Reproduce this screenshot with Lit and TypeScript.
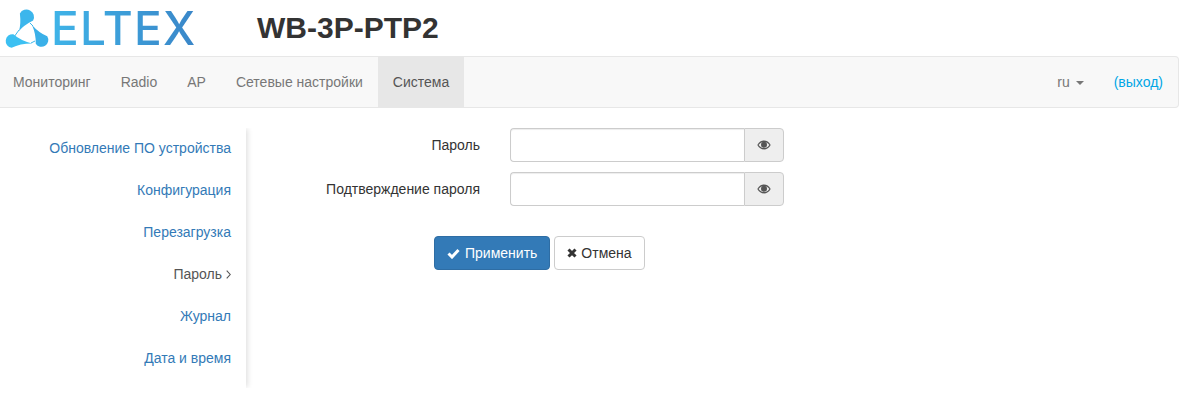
import {LitElement, css, html} from 'lit';
import {customElement} from 'lit/decorators.js';

const TOP_ITEMS = ['Мониторинг', 'Radio', 'AP', 'Сетевые настройки', 'Система'];
const SIDE_ITEMS = ['Обновление ПО устройства', 'Конфигурация', 'Перезагрузка', 'Пароль', 'Журнал', 'Дата и время'];
const FIELDS = ['Пароль', 'Подтверждение пароля'];

// teardrop: a circle whose tail tapers towards (tx, ty)
function drop(cx: number, cy: number, r: number, tx: number, ty: number) {
  const len = Math.hypot(tx - cx, ty - cy);
  const dx = (tx - cx) / len;
  const dy = (ty - cy) / len;
  const ax = cx - dy * r;
  const ay = cy + dx * r;
  const bx = cx + dy * r;
  const by = cy - dx * r;
  const mx = cx + dx * r * 1.15;
  const my = cy + dy * r * 1.15;
  return `M${ax} ${ay}Q${mx - dy * 1.5} ${my + dx * 1.5} ${tx} ${ty}Q${mx + dy * 1.5} ${my - dx * 1.5} ${bx} ${by}A${r} ${r} 0 0 0 ${ax} ${ay}Z`;
}

const eye = html`<svg class="eye" viewBox="0 0 14 10" width="14" height="10">
  <path d="M0.3 5C2 2 4.3.6 7 .6S12 2 13.7 5C12 8 9.7 9.4 7 9.4S2 8 .3 5Z" fill="#555"/>
  <path d="M1.6 5C3 3 4.8 1.9 7 1.9S11 3 12.4 5C11 7 9.2 8.1 7 8.1S3 7 1.6 5Z" fill="#eee"/>
  <circle cx="7" cy="4.8" r="3" fill="#555"/>
</svg>`;

@customElement('app-root')
export class AppRoot extends LitElement {
  static styles = css`
    :host {
      display: block;
      font-family: 'Liberation Sans', Arial, sans-serif;
      font-size: 14px;
      color: #333;
      background: #fff;
      height: 413px;
      overflow: hidden;
    }
    .header {
      display: flex;
      align-items: center;
      height: 56px;
    }
    .logo {
      display: flex;
      align-items: center;
      width: 257px;
      flex: none;
    }
    .logo svg {
      flex: none;
    }
    .wordmark {
      font-family: Inter, sans-serif;
      font-size: 46px;
      font-weight: 500;
      letter-spacing: 1.2px;
      line-height: 52px;
      margin-left: -1px;
      background: linear-gradient(90deg, #3fb4e8, #3a86c8);
      -webkit-background-clip: text;
      background-clip: text;
      color: transparent;
    }
    h1 {
      margin: 0;
      font-size: 30px;
      font-weight: 700;
      line-height: 56px;
    }
    .navbar {
      display: flex;
      justify-content: space-between;
      height: 50px;
      background: #f8f8f8;
      border: 1px solid #e7e7e7;
      border-left: 0;
      border-radius: 0 4px 4px 0;
    }
    .nav {
      display: flex;
      margin-left: -2px;
    }
    .nav a {
      padding: 15px;
      line-height: 20px;
      color: #777;
    }
    .nav a.active {
      background: #e7e7e7;
      color: #555;
    }
    .right {
      display: flex;
      line-height: 20px;
      padding-top: 15px;
    }
    .lang {
      color: #777;
    }
    .caret {
      display: inline-block;
      margin-left: 2px;
      vertical-align: middle;
      border-top: 4px solid #777;
      border-left: 4px solid transparent;
      border-right: 4px solid transparent;
    }
    .logout {
      color: #00a6e6;
      margin-left: 30px;
      margin-right: 15px;
    }
    .content {
      display: flex;
      padding-top: 20px;
    }
    .side {
      width: 246px;
      height: 260px;
      flex: none;
      box-shadow: 3px 0 5px -1px #e2e2e2;
      clip-path: inset(0 -10px 0 0);
      box-sizing: border-box;
      padding-right: 15px;
      display: flex;
      flex-direction: column;
      text-align: right;
    }
    .side a {
      height: 42px;
      line-height: 40px;
      color: #337ab7;
    }
    .side a.active {
      color: #555;
    }
    .chevron {
      margin-left: 4px;
    }
    .main {
      flex: none;
    }
    .row {
      display: flex;
      height: 34px;
      margin-bottom: 10px;
    }
    label {
      width: 234px;
      line-height: 34px;
      text-align: right;
      flex: none;
    }
    .group {
      display: flex;
      margin-left: 30px;
    }
    input {
      width: 234px;
      height: 34px;
      box-sizing: border-box;
      border: 1px solid #ccc;
      border-right: 0;
      border-radius: 4px 0 0 4px;
      box-shadow: inset 0 1px 1px rgba(0, 0, 0, 0.075);
      padding: 6px 12px;
    }
    .addon {
      display: flex;
      align-items: center;
      justify-content: center;
      width: 40px;
      box-sizing: border-box;
      background: #eee;
      border: 1px solid #ccc;
      border-radius: 0 4px 4px 0;
    }
    .actions {
      display: flex;
      gap: 4px;
      margin: 30px 0 0 188px;
    }
    button {
      height: 34px;
      box-sizing: border-box;
      border: 1px solid #ccc;
      border-radius: 4px;
      background: #fff;
      color: #333;
      font: inherit;
      padding: 0 12px;
      display: flex;
      align-items: center;
      gap: 5px;
    }
    button.cancel {
      gap: 4px;
    }
    button.primary {
      background: #337ab7;
      border-color: #2e6da4;
      color: #fff;
    }
  `;

  render() {
    return html`
      <div class="header">
        <div class="logo">
          <svg width="52" height="50" viewBox="0 0 52 50">
            <path d="M19 27 L14 34 M31 40 L35 38 M33 23 L30 20" fill="none" stroke="#3cb8ec" stroke-width="1" />
            <path d=${drop(26.5, 14, 7.5, 19, 28)} fill="#3cb6ec" />
            <path d=${drop(12.5, 38, 6.8, 32, 40.5)} fill="#3cc0f2" />
            <path d=${drop(41.5, 37, 6.8, 32, 22)} fill="#3ab0e8" />
          </svg>
          <span class="wordmark">ELTEX</span>
        </div>
        <h1>WB-3P-PTP2</h1>
      </div>
      <nav class="navbar">
        <div class="nav">
          ${TOP_ITEMS.map(item => html`<a class=${item === 'Система' ? 'active' : ''}>${item}</a>`)}
        </div>
        <div class="right">
          <span class="lang">ru <span class="caret"></span></span>
          <a class="logout">(выход)</a>
        </div>
      </nav>
      <div class="content">
        <div class="side">
          ${SIDE_ITEMS.map(item => item === 'Пароль'
            ? html`<a class="active">${item}<svg class="chevron" width="5" height="9" viewBox="0 0 5 9"><path d="M.7 .7 L4.2 4.5 L.7 8.3" fill="none" stroke="#555" stroke-width="1.1" /></svg></a>`
            : html`<a>${item}</a>`)}
        </div>
        <div class="main">
          ${FIELDS.map(field => html`
            <div class="row">
              <label>${field}</label>
              <div class="group">
                <input type="password" />
                <span class="addon">${eye}</span>
              </div>
            </div>
          `)}
          <div class="actions">
            <button class="primary">
              <svg width="13" height="11" viewBox="0 0 13 11"><path d="M1.5 5.5 L5 9 L11.5 2" fill="none" stroke="#fff" stroke-width="3" /></svg>
              Применить
            </button>
            <button class="cancel">
              <svg width="10" height="10" viewBox="0 0 10 10"><path d="M1.5 1.5 L8.5 8.5 M8.5 1.5 L1.5 8.5" fill="none" stroke="#333" stroke-width="3" /></svg>
              Отмена
            </button>
          </div>
        </div>
      </div>
    `;
  }
}
